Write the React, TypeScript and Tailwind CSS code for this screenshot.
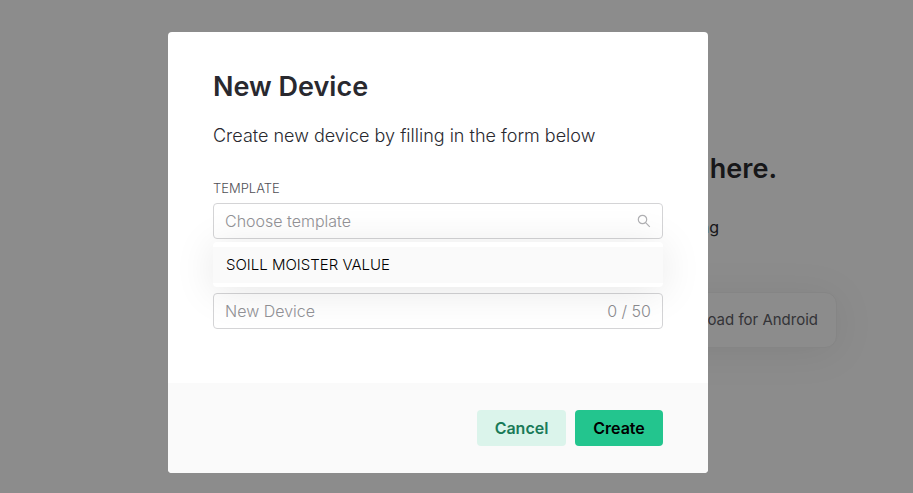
import { useState } from "react";

function Backdrop() {
  return (
    <main className="flex min-h-screen flex-col items-end overflow-hidden bg-white pt-[149px] text-[#2a2a2e]">
      <h1 className="pr-[136px] text-[27px] leading-10 font-semibold">Start here.</h1>
      <p className="mt-[22px] pr-[194px] text-base leading-8">or keep learning</p>
      <button
        type="button"
        className="mt-[49px] mr-[76px] h-14 rounded-xl border border-[#f2f2f2] bg-white px-[18px] text-[15px] text-[#5e5e66] shadow-[0_4px_40px_rgba(0,0,0,0.08)]"
      >
        Download for Android
      </button>
    </main>
  );
}

function SearchIcon() {
  return (
    <svg viewBox="0 0 14 14" className="size-3.5 shrink-0" fill="none" stroke="#b0b0b3" strokeWidth="1.2" aria-hidden="true">
      <circle cx="5.5" cy="5.5" r="4.2" />
      <path d="M8.6 8.6 12.8 12.8" />
    </svg>
  );
}

const field =
  "flex h-9 items-center rounded border border-[#d4d4d6] px-[11px] text-base font-light text-[#8c8c90]";
const input = "min-w-0 flex-1 bg-transparent outline-none placeholder:text-[#929296]";

export default function App() {
  const [template, setTemplate] = useState("");
  const [name, setName] = useState("");

  return (
    <div className="relative font-['Inter','Liberation_Sans',sans-serif]">
      <Backdrop />
      <div className="absolute inset-0 flex items-start justify-center bg-black/45 pt-8 pr-[37px]">
        <div role="dialog" aria-modal="true" aria-labelledby="title" className="w-full max-w-[540px] overflow-hidden rounded bg-white">
          <div className="px-[45px] pt-[37px] pb-[54px]">
            <h2 id="title" className="text-[27px] leading-9 font-semibold text-[#29292f]">New Device</h2>
            <p className="mt-[15px] text-lg leading-8 font-light text-[#29292f]">
              Create new device by filling in the form below
            </p>
            <div className="relative mt-[26px]">
              <label htmlFor="template" className="block text-[13px] leading-5 font-light text-[#505056]">
                TEMPLATE
              </label>
              <div className={`${field} mt-[5px]`}>
                <input
                  id="template"
                  className={input}
                  placeholder="Choose template"
                  value={template}
                  onChange={(e) => setTemplate(e.target.value)}
                />
                <SearchIcon />
              </div>
              <div role="listbox" className="absolute inset-x-0 top-full z-10 mt-[3px] rounded bg-white pt-[5px] pb-1 shadow-[0_4px_40px_rgba(0,0,0,0.10)]">
                <button
                  type="button"
                  role="option"
                  aria-selected="false"
                  onClick={() => setTemplate("SOILL MOISTER VALUE")}
                  className="block h-9 w-full bg-[#fafafa] px-[13px] text-left text-[15px] font-light text-black"
                >
                  SOILL MOISTER VALUE
                </button>
              </div>
            </div>
            <div className={`${field} mt-[54px]`}>
              <input
                aria-label="New Device"
                className={input}
                placeholder="New Device"
                maxLength={50}
                value={name}
                onChange={(e) => setName(e.target.value)}
              />
              <span>{name.length} / 50</span>
            </div>
          </div>
          <div className="flex justify-end gap-[9px] bg-[#fafafa] px-[45px] py-[27px]">
            <button type="button" className="h-9 w-[89px] rounded bg-[#dbf4eb] text-base font-semibold text-[#1a7a58]">
              Cancel
            </button>
            <button type="button" className="h-9 w-[88px] rounded bg-[#23c58e] text-base font-semibold text-black">
              Create
            </button>
          </div>
        </div>
      </div>
    </div>
  );
}
